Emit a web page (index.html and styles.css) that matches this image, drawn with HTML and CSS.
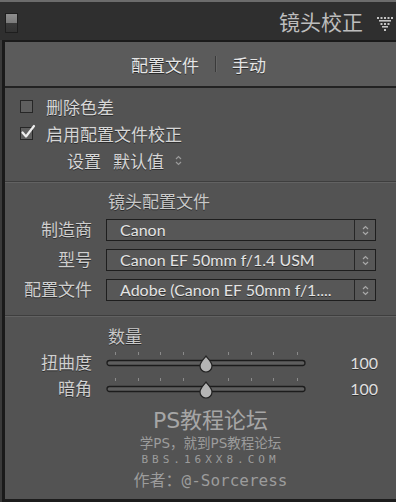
FILE: index.html
```html
<!DOCTYPE html>
<html lang="zh-CN">
<head>
    <meta charset="UTF-8">
    <meta name="viewport" content="width=device-width, initial-scale=1.0">
    <title>镜头校正</title>
    <link rel="stylesheet" href="styles.css">
</head>
<body>
    <div class="titlebar">
        <span class="toggle"></span>
        <h1>镜头校正</h1>
        <svg class="collapse" width="16" height="14" viewBox="0 0 16 14">
            <g fill="#c4c4c4">
                <rect x="0" y="0" width="2" height="2"/><rect x="3.5" y="0" width="2" height="2"/>
                <rect x="7" y="0" width="2" height="2"/><rect x="10.5" y="0" width="2" height="2"/>
                <rect x="14" y="0" width="2" height="2"/>
                <rect x="2" y="3" width="12" height="1.6"/>
                <rect x="3.5" y="6" width="2" height="2"/><rect x="7" y="6" width="2" height="2"/>
                <rect x="10.5" y="6" width="2" height="2"/>
                <rect x="5" y="9" width="6" height="1.6"/>
                <rect x="7" y="12" width="2" height="2"/>
            </g>
        </svg>
    </div>

    <div class="panel">
        <div class="tabs">
            <span class="tab">配置文件</span>
            <span class="tab-sep"></span>
            <span class="tab">手动</span>
        </div>

        <div class="options">
            <div class="check">
                <span class="box"></span>
                <span>删除色差</span>
            </div>
            <div class="check">
                <span class="box">
                    <svg class="tick" width="16" height="16" viewBox="0 0 16 16">
                        <path d="M2.5 8.5 L6 12.5 L14 2" fill="none" stroke="#eeeeee" stroke-width="2.2" stroke-linecap="round" stroke-linejoin="round"/>
                    </svg>
                </span>
                <span>启用配置文件校正</span>
            </div>
            <div class="setup">
                <span>设置</span>
                <span class="setup-value">默认值</span>
                <svg width="7" height="11" viewBox="0 0 7 11">
                    <path d="M1 4 L3.5 1.5 L6 4 M1 7 L3.5 9.5 L6 7" fill="none" stroke="#9a9a9a" stroke-width="1.2"/>
                </svg>
            </div>
        </div>

        <div class="profile">
            <h2>镜头配置文件</h2>
            <div class="fields">
                <span class="label">制造商</span>
                <div class="select">
                    <span class="select-text">Canon</span>
                    <span class="arrows"><svg width="7" height="11" viewBox="0 0 7 11"><path d="M1 4 L3.5 1.5 L6 4 M1 7 L3.5 9.5 L6 7" fill="none" stroke="#a8a8a8" stroke-width="1.2"/></svg></span>
                </div>
                <span class="label">型号</span>
                <div class="select">
                    <span class="select-text">Canon EF 50mm f/1.4 USM</span>
                    <span class="arrows"><svg width="7" height="11" viewBox="0 0 7 11"><path d="M1 4 L3.5 1.5 L6 4 M1 7 L3.5 9.5 L6 7" fill="none" stroke="#a8a8a8" stroke-width="1.2"/></svg></span>
                </div>
                <span class="label">配置文件</span>
                <div class="select">
                    <span class="select-text">Adobe (Canon EF 50mm f/1....</span>
                    <span class="arrows"><svg width="7" height="11" viewBox="0 0 7 11"><path d="M1 4 L3.5 1.5 L6 4 M1 7 L3.5 9.5 L6 7" fill="none" stroke="#a8a8a8" stroke-width="1.2"/></svg></span>
                </div>
            </div>
        </div>

        <div class="amount">
            <h2>数量</h2>
            <div class="slider-row">
                <span class="label">扭曲度</span>
                <svg class="slider" width="200" height="22" viewBox="0 0 200 22">
                    <g fill="#8a8a8a">
                        <rect x="9" y="0" width="1" height="3"/><rect x="32" y="0" width="1" height="3"/>
                        <rect x="54" y="0" width="1" height="3"/><rect x="77" y="0" width="1" height="3"/>
                        <rect x="122" y="0" width="1" height="3"/><rect x="145" y="0" width="1" height="3"/>
                        <rect x="167" y="0" width="1" height="3"/><rect x="191" y="0" width="1" height="3"/>
                    </g>
                    <rect x="1" y="8.5" width="198" height="5" rx="2.5" fill="#5e5e5e" stroke="#1c1c1c" stroke-width="1.3"/>
                    <path d="M100 4 C102 7 106 10 106 14 A6 6 0 0 1 94 14 C94 10 98 7 100 4 Z" fill="#b4b4b4" stroke="#222" stroke-width="1.2"/>
                </svg>
                <span class="value">100</span>
            </div>
            <div class="slider-row">
                <span class="label">暗角</span>
                <svg class="slider" width="200" height="22" viewBox="0 0 200 22">
                    <g fill="#8a8a8a">
                        <rect x="9" y="0" width="1" height="3"/><rect x="32" y="0" width="1" height="3"/>
                        <rect x="54" y="0" width="1" height="3"/><rect x="77" y="0" width="1" height="3"/>
                        <rect x="122" y="0" width="1" height="3"/><rect x="145" y="0" width="1" height="3"/>
                        <rect x="167" y="0" width="1" height="3"/><rect x="191" y="0" width="1" height="3"/>
                    </g>
                    <rect x="1" y="8.5" width="198" height="5" rx="2.5" fill="#5e5e5e" stroke="#1c1c1c" stroke-width="1.3"/>
                    <path d="M100 4 C102 7 106 10 106 14 A6 6 0 0 1 94 14 C94 10 98 7 100 4 Z" fill="#b4b4b4" stroke="#222" stroke-width="1.2"/>
                </svg>
                <span class="value">100</span>
            </div>
        </div>

        <div class="mark">
            <div class="mark-title">PS教程论坛</div>
            <div class="mark-sub">学PS，就到PS教程论坛</div>
            <div class="mark-url">BBS.16XX8.COM</div>
            <div class="mark-author">作者：@-Sorceress</div>
        </div>
    </div>
</body>
</html>
```

FILE: styles.css
```css
html, body {
    height: 100%;
}
body {
    margin: 0;
    background-color: #3a3a3a;
    font-family: Lato, "Noto Sans CJK SC", sans-serif;
    color: #d6d6d6;
    display: flex;
    flex-direction: column;
    overflow: hidden;
}
.titlebar {
    height: 38px;
    border-top: 2px solid #6c6c6c;
    background-color: #2f2f2f;
    display: flex;
    align-items: center;
    padding: 0 3px 0 5px;
}
.toggle {
    width: 11px;
    height: 18px;
    margin-top: 3px;
    background: linear-gradient(#8e8e8e 0, #7a7a7a 50%, #3a3a3a 50%, #333 100%);
    border: 1px solid #1e1e1e;
}
.titlebar h1 {
    margin: 0 0 0 auto;
    font-size: 21px;
    font-weight: normal;
    color: #bdbdbd;
    font-family: "Noto Sans CJK SC", sans-serif;
    line-height: 1;
}
.collapse {
    margin: 5px 0 0 14px;
}
.panel {
    flex: 1;
    margin-left: 2px;
    border-left: 3px solid #1a1a1a;
    border-bottom: 3px solid #1c1c1c;
    background-color: #535353;
    display: flex;
    flex-direction: column;
}
.tabs {
    height: 44px;
    border-top: 2px solid #1b1b1b;
    border-bottom: 2px solid #222;
    background-color: #5b5b5b;
    display: flex;
    align-items: center;
    justify-content: center;
    gap: 16px;
    padding-right: 4px;
    font-size: 17px;
    color: #e6e6e6;
    text-shadow: 0 1px 0 #2a2a2a;
}
.tab-sep {
    width: 1px;
    height: 16px;
    background-color: #3a3a3a;
    box-shadow: 1px 0 0 #666;
}
.options {
    padding: 5px 0 7px;
    border-bottom: 1px solid #3e3e3e;
    box-shadow: 0 1px 0 #626262;
    font-size: 17px;
}
.check {
    height: 27px;
    display: flex;
    align-items: center;
    padding-left: 15px;
    text-shadow: 0 1px 0 #2e2e2e;
}
.box {
    position: relative;
    width: 11px;
    height: 11px;
    border: 1px solid #262626;
    background-color: #5f5f5f;
    margin-right: 13px;
}
.tick {
    position: absolute;
    left: -1px;
    top: -4px;
}
.setup {
    height: 27px;
    display: flex;
    align-items: center;
    padding-left: 62px;
    gap: 12px;
    text-shadow: 0 1px 0 #2e2e2e;
}
.setup-value {
    margin-right: -1px;
}
.profile {
    padding: 8px 0 14px;
    border-bottom: 1px solid #3e3e3e;
    box-shadow: 0 1px 0 #626262;
}
h2 {
    margin: 0 0 0 103px;
    height: 24px;
    line-height: 24px;
    font-size: 17px;
    font-weight: normal;
    color: #c8c8c8;
    text-shadow: 0 1px 0 #2e2e2e;
}
.fields {
    margin-top: 5px;
    display: grid;
    grid-template-columns: 87px 270px;
    grid-auto-rows: 22px;
    column-gap: 14px;
    row-gap: 8px;
    align-items: center;
}
.label {
    text-align: right;
    font-size: 17px;
    line-height: 22px;
    color: #cfcfcf;
    text-shadow: 0 1px 0 #2e2e2e;
    white-space: nowrap;
}
.select {
    height: 20px;
    border: 1px solid #1e1e1e;
    background-color: #575757;
    display: flex;
    align-items: center;
}
.select-text {
    flex: 1;
    padding-left: 13px;
    font-size: 16px;
    line-height: 20px;
    color: #e4e4e4;
    white-space: nowrap;
    overflow: hidden;
    text-shadow: 0 1px 0 #2e2e2e;
}
.arrows {
    width: 20px;
    height: 100%;
    border-left: 1px solid #262626;
    display: flex;
    align-items: center;
    justify-content: center;
}
.amount {
    padding-top: 9px;
}
.amount h2 {
    margin-bottom: 1px;
}
.slider-row {
    height: 26px;
    display: flex;
    align-items: center;
}
.slider-row .label {
    width: 87px;
}
.slider {
    margin-left: 14px;
}
.value {
    flex: 1;
    text-align: right;
    padding-right: 18px;
    font-size: 16px;
    line-height: 22px;
    color: #e0e0e0;
    text-shadow: 0 1px 0 #2e2e2e;
}
.mark {
    margin-top: 7px;
    padding-left: 20px;
    text-align: center;
    color: #9c9c9c;
    font-family: "DejaVu Sans Mono", "Noto Sans CJK SC", monospace;
}
.mark-title {
    height: 24px;
    line-height: 24px;
    font-size: 22px;
    color: #a6a6a6;
    font-family: "DejaVu Sans", "Noto Sans CJK SC", sans-serif;
}
.mark-sub {
    height: 16px;
    line-height: 16px;
    font-size: 13.5px;
    margin-top: 2px;
    font-family: "DejaVu Sans", "Noto Sans CJK SC", sans-serif;
}
.mark-url {
    height: 16px;
    line-height: 16px;
    margin-top: 1px;
    font-size: 11px;
    letter-spacing: 4px;
}
.mark-author {
    height: 22px;
    line-height: 22px;
    margin-top: 2px;
    font-size: 16px;
}
```
